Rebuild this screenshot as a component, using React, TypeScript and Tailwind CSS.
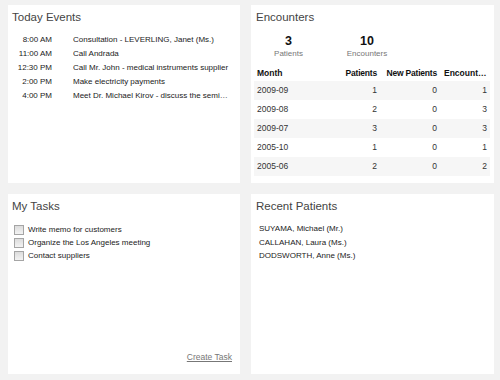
import React from "react";

const events = [
  { time: "8:00 AM", text: "Consultation - LEVERLING, Janet (Ms.)" },
  { time: "11:00 AM", text: "Call Andrada" },
  { time: "12:30 PM", text: "Call Mr. John - medical instruments supplier" },
  { time: "2:00 PM", text: "Make electricity payments" },
  { time: "4:00 PM", text: "Meet Dr. Michael Kirov - discuss the seminar schedule" },
];

const rows = [
  { month: "2009-09", patients: 1, newPatients: 0, encounters: 1 },
  { month: "2009-08", patients: 2, newPatients: 0, encounters: 3 },
  { month: "2009-07", patients: 3, newPatients: 0, encounters: 3 },
  { month: "2005-10", patients: 1, newPatients: 0, encounters: 1 },
  { month: "2005-06", patients: 2, newPatients: 0, encounters: 2 },
];

const tasks = [
  "Write memo for customers",
  "Organize the Los Angeles meeting",
  "Contact suppliers",
];

const patients = [
  "SUYAMA, Michael (Mr.)",
  "CALLAHAN, Laura (Ms.)",
  "DODSWORTH, Anne (Ms.)",
];

function Title({ children, className = "" }: { children: React.ReactNode; className?: string }) {
  return (
    <div className={"text-[11.5px] leading-[14px] text-[#444] " + className}>
      {children}
    </div>
  );
}

export default function App() {
  return (
    <div
      className="w-[500px] h-[380px] bg-[#f2f2f2] pt-[5px] pl-[8px] text-[#222]"
      style={{ fontFamily: '"Liberation Sans", Arial, sans-serif' }}
    >
      <div className="grid grid-cols-[232px_243px] grid-rows-[178px_180px] gap-[11px]">
        {/* Today Events */}
        <div className="bg-white pt-[5px]">
          <Title className="pl-[4px]">Today Events</Title>
          <div className="mt-[9px] text-[8px] leading-[14px]">
            {events.map((e) => (
              <div key={e.time} className="flex">
                <div className="w-[44px] shrink-0 text-right">{e.time}</div>
                <div className="ml-[21px] w-[158px] truncate">{e.text}</div>
              </div>
            ))}
          </div>
        </div>

        {/* Encounters */}
        <div className="bg-white pt-[5px] px-[3px]">
          <Title className="pl-[2px]">Encounters</Title>
          <div className="mt-[10px] flex">
            <div className="w-[69px] text-center">
              <div className="text-[12.5px] leading-[14px] font-bold text-[#111]">3</div>
              <div className="text-[8px] leading-[12px] text-[#777]">Patients</div>
            </div>
            <div className="w-[88px] text-center">
              <div className="text-[12.5px] leading-[14px] font-bold text-[#111]">10</div>
              <div className="text-[8px] leading-[12px] text-[#777]">Encounters</div>
            </div>
          </div>
          <table className="mt-[6px] w-[236px] table-fixed border-collapse text-[8.5px] text-[#333]">
            <colgroup>
              <col className="w-[86px]" />
              <col className="w-[38px]" />
              <col className="w-[60px]" />
              <col className="w-[52px]" />
            </colgroup>
            <thead>
              <tr className="h-[15px] text-[#111]">
                <th className="text-left font-bold pl-[3px]">Month</th>
                <th className="text-right font-bold pr-[1px] tracking-[-0.2px] whitespace-nowrap">Patients</th>
                <th className="text-right font-bold pr-[1px] tracking-[-0.2px] whitespace-nowrap">New Patients</th>
                <th className="text-right font-bold pl-[6px] pr-[3px] overflow-hidden text-ellipsis whitespace-nowrap">Encounters</th>
              </tr>
            </thead>
            <tbody>
              {rows.map((r, i) => (
                <tr key={r.month} className={"h-[19px] " + (i % 2 === 0 ? "bg-[#f6f6f6]" : "bg-white")}>
                  <td className="pl-[3px]">{r.month}</td>
                  <td className="text-right pr-[1px]">{r.patients}</td>
                  <td className="text-right pr-[1px]">{r.newPatients}</td>
                  <td className="text-right pr-[3px]">{r.encounters}</td>
                </tr>
              ))}
            </tbody>
          </table>
        </div>

        {/* My Tasks */}
        <div className="bg-white pt-[5px] flex flex-col">
          <Title className="pl-[4px]">My Tasks</Title>
          <div className="mt-[10px] pl-[6px] text-[8px] leading-[13px]">
            {tasks.map((t) => (
              <label key={t} className="flex items-center">
                <span className="w-[10px] h-[10px] border border-[#a5a5a5] bg-gradient-to-b from-[#dcdcdc] to-[#f3f3f3] shrink-0" />
                <span className="ml-[4px]">{t}</span>
              </label>
            ))}
          </div>
          <div className="mt-auto pb-[7px] pr-[8px] text-right">
            <a href="#" className="text-[8.5px] leading-[12px] text-[#777] underline">
              Create Task
            </a>
          </div>
        </div>

        {/* Recent Patients */}
        <div className="bg-white pt-[5px]">
          <Title className="pl-[5px]">Recent Patients</Title>
          <div className="mt-[9px] pl-[8px] text-[8px] leading-[13.5px]">
            {patients.map((p) => (
              <div key={p}>{p}</div>
            ))}
          </div>
        </div>
      </div>
    </div>
  );
}
